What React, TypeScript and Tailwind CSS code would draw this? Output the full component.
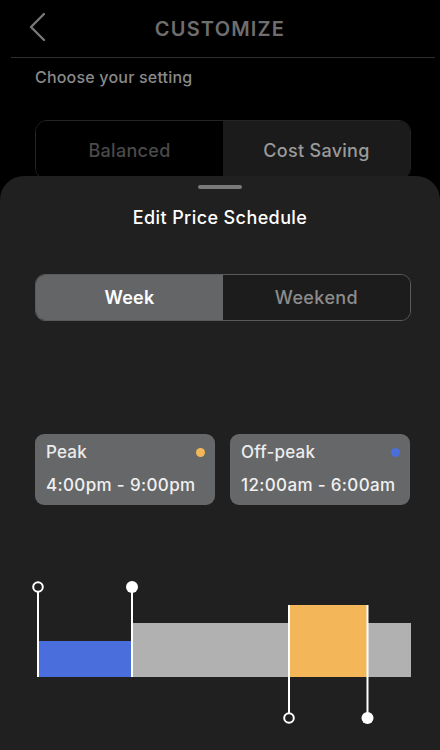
function Chart() {
  return (
    <svg width="440" height="160" viewBox="0 575 440 160" className="block">
      <rect x="132" y="623" width="279" height="54" fill="#b1b1b1" />
      <rect x="38" y="641" width="94" height="36" fill="#4a6fdc" />
      <rect x="289" y="605" width="79" height="72" fill="#f3b75a" />
      <line x1="38" y1="587" x2="38" y2="677" stroke="#ffffff" strokeWidth="2" />
      <line x1="132" y1="587" x2="132" y2="677" stroke="#ffffff" strokeWidth="2" />
      <line x1="289" y1="605" x2="289" y2="718" stroke="#ffffff" strokeWidth="2" />
      <line x1="367.5" y1="605" x2="367.5" y2="718" stroke="#ffffff" strokeWidth="2" />
      <circle cx="38" cy="587" r="4.8" fill="#202020" stroke="#ffffff" strokeWidth="2" />
      <circle cx="132" cy="587" r="6" fill="#ffffff" />
      <circle cx="289" cy="718" r="4.8" fill="#202020" stroke="#ffffff" strokeWidth="2" />
      <circle cx="367.5" cy="718" r="6" fill="#ffffff" />
    </svg>
  )
}

function RateCard({ label, time, dot }: { label: string; time: string; dot: string }) {
  return (
    <div className="w-[180px] h-[71px] rounded-[9px] bg-[#666769] pl-[11px] pr-[10px] pt-[8px]">
      <div className="flex items-center justify-between">
        <span className="text-[17px] leading-[20px] text-[#ececec] font-medium tracking-[0.2px]">{label}</span>
        <span className={`w-[9px] h-[9px] rounded-full ${dot}`} />
      </div>
      <div className="mt-[12px] text-[17px] leading-[22px] text-[#f0f0f0] font-medium tracking-[0.35px]">{time}</div>
    </div>
  )
}

export default function App() {
  return (
    <div className="relative w-[440px] h-[750px] overflow-hidden bg-black font-['Inter','Liberation_Sans',sans-serif]">
      <div className="relative h-[57px] flex items-center justify-center">
        <svg className="absolute left-[28px] top-[12px]" width="20" height="30" viewBox="0 0 20 30">
          <polyline points="16,2 3,15 16,28" fill="none" stroke="#787878" strokeWidth="2.4" strokeLinecap="round" strokeLinejoin="round" />
        </svg>
        <h1 className="text-[20px] font-semibold tracking-[1.2px] text-[#6e6e6e]">CUSTOMIZE</h1>
      </div>
      <div className="ml-[11px] mr-[5px] h-px bg-[#2e2e2e]" />
      <p className="mt-[8px] ml-[35px] text-[16px] leading-[22px] font-medium tracking-[0.2px] text-[#8a8a8a]">Choose your setting</p>

      <div className="mt-[32px] ml-[35px] w-[376px] h-[60px] flex rounded-[12px] border border-[#242424] overflow-hidden">
        <div className="flex-1 flex items-center justify-center bg-black text-[18px] font-medium tracking-[0.3px] text-[#4a4a4a]">Balanced</div>
        <div className="flex-1 flex items-center justify-center bg-[#1b1b1b] text-[18px] font-medium tracking-[0.3px] text-[#9a9a9a]">Cost Saving</div>
      </div>

      <div className="absolute top-[176px] inset-x-0 bottom-0 rounded-t-[24px] bg-[#202020] flex flex-col">
        <div className="mt-[9px] mx-auto w-[44px] h-[4px] rounded-full bg-[#7a7a7a]" />
        <h2 className="mt-[17px] text-center text-[18px] leading-[24px] font-medium tracking-[0.4px] text-white">Edit Price Schedule</h2>

        <div className="mt-[44px] ml-[35px] w-[376px] h-[47px] flex rounded-[10px] border border-[#5a5a5a] overflow-hidden">
          <div className="flex-1 flex items-center justify-center bg-[#646567] text-[18px] font-semibold tracking-[0.3px] text-white">Week</div>
          <div className="flex-1 flex items-center justify-center bg-[#1c1c1c] text-[18px] font-medium tracking-[0.4px] text-[#8c8c8c]">Weekend</div>
        </div>

        <div className="mt-[113px] ml-[35px] flex gap-[15px]">
          <RateCard label="Peak" time="4:00pm - 9:00pm" dot="bg-[#f3b75a]" />
          <RateCard label="Off-peak" time="12:00am - 6:00am" dot="bg-[#4a6fdc]" />
        </div>

        <div className="mt-[70px]">
          <Chart />
        </div>
      </div>
    </div>
  )
}
